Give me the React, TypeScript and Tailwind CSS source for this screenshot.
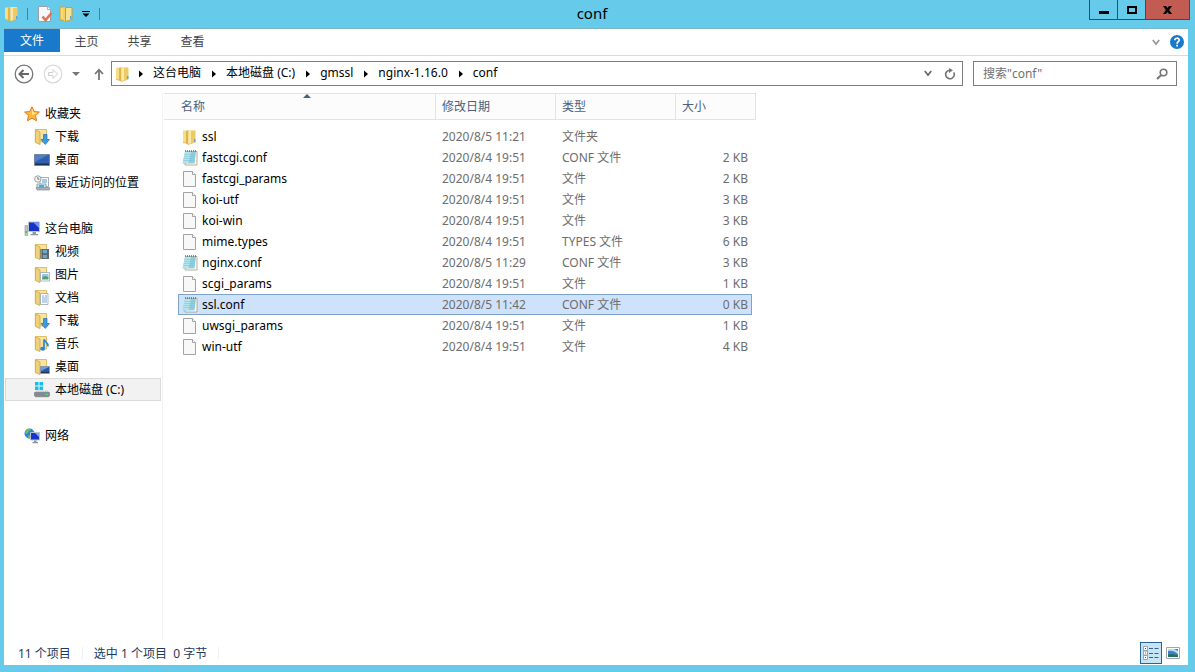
import React, { useState } from 'react';

type IconProps = { className?: string };

const FolderBase = () => (
  <>
    <path d="M1 1.500h5.500V15L1 13.500z" fill="#f7de86" />
    <path d="M4 2l2.500-1v14.500L4 14z" fill="#dfb54a" />
    <path d="M6.500 1H13V13L6.500 15.500z" fill="#fae9a6" />
    <path d="M9 2v12l4.500-1.500V1.500z" fill="#eccb66" />
    <path d="M1 13.500l3 .5 2.500 1.500L13.500 13" stroke="#c9a545" strokeWidth=".6" fill="none" />
  </>
);

const Folder = ({ className = 'size-4' }: IconProps) => (
  <svg viewBox="0 0 16 16" className={className} aria-hidden="true">
    <FolderBase />
    <path d="M12 10h1.500v3H12z" fill="#5ea5cf" />
  </svg>
);

const OpenFolder = () => (
  <>
    <path d="M1.500.5h11V13h-11z" fill="#f7e4a0" stroke="#d5b055" strokeWidth=".8" />
    <path d="M1.300.8L6 3v12.500L1.300 13.500z" fill="#efd17a" stroke="#cda845" strokeWidth=".8" />
  </>
);

const Star = () => (
  <svg viewBox="0 0 16 16" className="size-4" aria-hidden="true">
    <path d="M8 .8l2.200 4.700 5.200.6-3.900 3.500 1.100 5.200L8 12.200l-4.600 2.600 1.100-5.200L.6 6.100l5.200-.6z" fill="#fdb93a" stroke="#e2762a" strokeWidth="1" />
    <path d="M8 2.500l1.500 4 3.800.4L8 9z" fill="#ffe58a" />
  </svg>
);

const Downloads = () => (
  <svg viewBox="0 0 16 16" className="size-4" aria-hidden="true">
    <OpenFolder />
    <path d="M9.500 5.500h3.500v5h2.500l-4.250 5-4.250-5h2.500z" fill="#3d9be0" stroke="#1e6db5" strokeWidth=".7" />
  </svg>
);

const Desktop = () => (
  <svg viewBox="0 0 16 16" className="size-4" aria-hidden="true">
    <path d="M.5 2.500h15v11H.5z" fill="#2f5fae" stroke="#7387a0" />
    <path d="M1 3h13L1 10z" fill="#4d80c8" />
    <path d="M1 11.500h14v1.500H1z" fill="#1c2f50" />
  </svg>
);

const Recent = () => (
  <svg viewBox="0 0 16 16" className="size-4" aria-hidden="true">
    <path d="M6 2.500h8.500v9H6z" fill="#fafcfd" stroke="#8c9aa5" strokeWidth=".8" />
    <path d="M8 5h5M8 7h5" stroke="#4c9ac5" />
    <path d="M3 9h9v4H3z" fill="#d7e6ee" stroke="#84929d" strokeWidth=".8" />
    <path d="M5 10h5v2H5z" fill="#3faee0" />
    <path d="M2 12.500h13.500V15H3z" fill="#a7b1b8" stroke="#79848d" strokeWidth=".6" />
    <circle cx="3.800" cy="4" r="3.200" fill="#f5f7f8" stroke="#8e979e" strokeWidth=".9" />
    <path d="M3.800 2v2.200h1.700" stroke="#555" strokeWidth=".8" fill="none" />
  </svg>
);

const Computer = () => (
  <svg viewBox="0 0 16 16" className="size-4" aria-hidden="true">
    <path d="M1 4.500h2.500v10H1z" fill="#c2c7ca" stroke="#8c9296" strokeWidth=".6" />
    <path d="M1.500 10h1.500v2H1.500z" fill="#5bb945" />
    <path d="M4.500 1h11v9.500h-11z" fill="#1733c4" stroke="#bcc4cc" />
    <path d="M9.500 1.500H15v5.500z" fill="#6d9bf2" />
    <path d="M8.500 11h3.500v2H8.500zM6.500 13h7.500v1.200H6.500z" fill="#8f999f" />
  </svg>
);

const Videos = () => (
  <svg viewBox="0 0 16 16" className="size-4" aria-hidden="true">
    <OpenFolder />
    <path d="M6.500 5H15v10H6.500z" fill="#3b4449" />
    <path d="M8.500 5.500H13v4H8.500z" fill="#6fa7c9" />
    <path d="M8.500 10.500H13v4H8.500z" fill="#7f9cb0" />
    <path d="M7.500 5.500v9.500M14 5.500v9.500" stroke="#fff" strokeWidth=".8" strokeDasharray="1 1" />
  </svg>
);

const Pictures = () => (
  <svg viewBox="0 0 16 16" className="size-4" aria-hidden="true">
    <OpenFolder />
    <path d="M6.500 5.500h9v8.500h-9z" fill="#fff" stroke="#9aa4aa" strokeWidth=".8" />
    <path d="M8 7h6.500v3.500H8z" fill="#8ccae9" />
    <path d="M8 10.500l3-1.500 3.500 1v2.500H8z" fill="#5d9a74" />
  </svg>
);

const Documents = () => (
  <svg viewBox="0 0 16 16" className="size-4" aria-hidden="true">
    <OpenFolder />
    <path d="M6.500 3.500h7.500v11H6.500z" fill="#fff" stroke="#9aa4aa" strokeWidth=".8" />
    <path d="M8 6h2M11 6h2M8 8h5M8 10h5M8 12h5" stroke="#6b9fd2" strokeWidth=".9" />
  </svg>
);

const Music = () => (
  <svg viewBox="0 0 16 16" className="size-4" aria-hidden="true">
    <OpenFolder />
    <ellipse cx="8.700" cy="12.700" rx="2.400" ry="2" fill="#2e86d6" />
    <path d="M10 12.500V3.500c1 2 4.500 3 4 7" fill="none" stroke="#2e86d6" strokeWidth="1.700" />
  </svg>
);

const DesktopFolder = () => (
  <svg viewBox="0 0 16 16" className="size-4" aria-hidden="true">
    <OpenFolder />
    <path d="M6.500 7.500h9v7h-9z" fill="#2659a8" stroke="#8b98a5" strokeWidth=".8" />
    <path d="M7 8h8l-8 4z" fill="#6ba0dd" />
    <path d="M7 13h8v1H7z" fill="#243247" />
  </svg>
);

const Drive = () => (
  <svg viewBox="0 0 16 16" className="size-4" aria-hidden="true">
    <path d="M1 0h3.500v3.500H1zM5.500 0H9v3.500H5.500zM1 4.500h3.500V8H1zM5.500 4.500H9V8H5.500z" fill="#0fc0f3" />
    <path d="M2 8.500h12l1.500 2.500H.5z" fill="#c9cfd3" />
    <path d="M.5 10.500h15v3.500l-1 .8h-13l-1-.8z" fill="#808b92" stroke="#626d74" strokeWidth=".5" />
    <path d="M11.500 12.500H14" stroke="#55e070" strokeWidth="1.200" />
  </svg>
);

const Network = () => (
  <svg viewBox="0 0 16 16" className="size-4" aria-hidden="true">
    <circle cx="5.500" cy="5.500" r="5" fill="#2f86d8" />
    <path d="M2.500 1.500C4 .5 7 .5 7 1.500S4.500 3 4 4.500 2 6 .8 5.500zM4.500 7l2 .5-1 3H4z" fill="#6cc04e" />
    <path d="M6.500 4.500h9v7.500h-9z" fill="#1735c8" stroke="#bcc5cc" />
    <path d="M11 5h4v4z" fill="#7ca9f5" />
    <path d="M10 12.500h2.500V14H10zM8.500 14h5.500v1.200H8.500z" fill="#8a949b" />
  </svg>
);

const ConfFile = () => (
  <svg viewBox="0 0 16 16" className="size-4" aria-hidden="true">
    <path d="M4 1.500h11v13.500H3z" fill="#fdfdfb" stroke="#a8977c" strokeWidth=".8" />
    <path d="M3 1.500h11L12.500 13.500H.5z" fill="#8dcfe0" />
    <path d="M3 2h6L6.500 13H.8z" fill="#b4e3ee" />
    <path d="M2.800 4.500h10.500M2.500 6.500h10.500M2 8.500h10.500M1.500 10.500h11" stroke="#79bfd2" strokeWidth=".5" />
    <path d="M3 1h11.500" stroke="#5c6a70" strokeWidth="1.400" strokeDasharray="1 1" />
  </svg>
);

const PlainFile = () => (
  <svg viewBox="0 0 16 16" className="size-4" aria-hidden="true">
    <path d="M1.500.5h9l3 3v12h-12z" fill="#f8f8f8" stroke="#a3a3a3" />
    <path d="M10.500.5v3h3" fill="#fff" stroke="#a3a3a3" />
  </svg>
);

const PropertiesIcon = () => (
  <svg viewBox="0 0 16 16" className="size-4" aria-hidden="true">
    <path d="M1.500.5h9l3 3v12h-12z" fill="#f7f7f9" stroke="#9aa0a8" />
    <path d="M10.500.5v3h3" fill="#fff" stroke="#9aa0a8" strokeWidth=".8" />
    <path d="M5.500 10.500l3 3.500 6-7" fill="none" stroke="#e5714a" strokeWidth="2.500" />
  </svg>
);

const NewFolderIcon = () => (
  <svg viewBox="0 0 16 16" className="size-4" aria-hidden="true">
    <path d="M2 1h6v13H2z" fill="#f5dc7c" stroke="#c9a030" />
    <path d="M5 2l2.500-1v14.500L5 14z" fill="#f0cf66" />
    <path d="M7.500 1.500h6.500v12l-6.500 2z" fill="#f7e190" stroke="#c9a030" />
    <path d="M12 10h1.500v3H12z" fill="#5ea5cf" />
  </svg>
);

const Crumb = ({ className = '' }: IconProps) => (
  <svg viewBox="0 0 4 8" className={`mr-[10px] h-2 w-1 shrink-0 ${className}`} aria-hidden="true">
    <path d="M0 .5L4 4 0 7.500z" fill="#000" />
  </svg>
);

const Chevron = ({ className = '' }: IconProps) => (
  <svg viewBox="0 0 8 7" className={`h-[7px] w-2 ${className}`} aria-hidden="true">
    <path d="M.8 1L4 5 7.200 1" fill="none" stroke="currentColor" strokeWidth="1.800" />
  </svg>
);

const navGroups = [
  {
    label: '收藏夹',
    icon: <Star />,
    items: [
      { label: '下载', icon: <Downloads /> },
      { label: '桌面', icon: <Desktop /> },
      { label: '最近访问的位置', icon: <Recent /> },
    ],
  },
  {
    label: '这台电脑',
    icon: <Computer />,
    items: [
      { label: '视频', icon: <Videos /> },
      { label: '图片', icon: <Pictures /> },
      { label: '文档', icon: <Documents /> },
      { label: '下载', icon: <Downloads /> },
      { label: '音乐', icon: <Music /> },
      { label: '桌面', icon: <DesktopFolder /> },
      { label: '本地磁盘 (C:)', icon: <Drive />, active: true },
    ],
  },
  { label: '网络', icon: <Network />, items: [] },
] as {
  label: string;
  icon: React.ReactNode;
  items: { label: string; icon: React.ReactNode; active?: boolean }[];
}[];

const files = [
  { name: 'ssl', date: '2020/8/5 11:21', type: '文件夹', size: '' },
  { name: 'fastcgi.conf', date: '2020/8/4 19:51', type: 'CONF 文件', size: '2 KB' },
  { name: 'fastcgi_params', date: '2020/8/4 19:51', type: '文件', size: '2 KB' },
  { name: 'koi-utf', date: '2020/8/4 19:51', type: '文件', size: '3 KB' },
  { name: 'koi-win', date: '2020/8/4 19:51', type: '文件', size: '3 KB' },
  { name: 'mime.types', date: '2020/8/4 19:51', type: 'TYPES 文件', size: '6 KB' },
  { name: 'nginx.conf', date: '2020/8/5 11:29', type: 'CONF 文件', size: '3 KB' },
  { name: 'scgi_params', date: '2020/8/4 19:51', type: '文件', size: '1 KB' },
  { name: 'ssl.conf', date: '2020/8/5 11:42', type: 'CONF 文件', size: '0 KB' },
  { name: 'uwsgi_params', date: '2020/8/4 19:51', type: '文件', size: '1 KB' },
  { name: 'win-utf', date: '2020/8/4 19:51', type: '文件', size: '4 KB' },
];

function fileIcon(type: string) {
  if (type === '文件夹') return <Folder />;
  if (type === 'CONF 文件') return <ConfFile />;
  return <PlainFile />;
}

function TitleBar() {
  return (
    <header className="flex h-7 shrink-0 items-start">
      <div className="flex h-7 w-[95px] shrink-0 items-center pl-1">
        <Folder />
        <span className="ml-[7px] h-3 w-px bg-[#4a8199]" />
        <button aria-label="属性" className="ml-[9px]"><PropertiesIcon /></button>
        <button aria-label="新建文件夹" className="ml-[5px]"><NewFolderIcon /></button>
        <button aria-label="自定义快速访问工具栏" className="ml-2">
          <svg viewBox="0 0 8 6" className="h-[6px] w-2" aria-hidden="true">
            <path d="M0 0h8v1H0zM.5 2.500h7L4 6z" fill="#000" />
          </svg>
        </button>
      </div>
      <div className="flex h-7 w-0 shrink-0 items-center">
        <span className="ml-1 h-3 w-px shrink-0 bg-[#4a8199]" />
      </div>
      <h1 className="flex-1 pt-px text-center text-[15px] leading-6 text-black">conf</h1>
      <div className="mr-[5px] flex h-5 border-x border-b border-[#25536a]">
        <button aria-label="最小化" className="flex w-[27px] items-center justify-center">
          <span className="mt-[5px] h-[3px] w-[10px] bg-black" />
        </button>
        <button aria-label="最大化" className="flex w-7 items-center justify-center border-l border-[#25536a]">
          <span className="h-2 w-[10px] border-2 border-black" />
        </button>
        <button aria-label="关闭" className="flex w-11 items-center justify-center border-l border-[#25536a] bg-[#c25b52]">
          <svg viewBox="0 0 9 8" className="h-2 w-[9px]" aria-hidden="true">
            <path d="M0 0h3l1.500 2L6 0h3L6.200 4 9 8H6L4.500 6 3 8H0l2.800-4z" fill="#000" />
          </svg>
        </button>
      </div>
    </header>
  );
}

function Ribbon() {
  return (
    <nav className="flex h-[27px] shrink-0 items-start border-b border-[#dadbdc] text-[#444]">
      <button className="h-[23px] w-14 bg-[#1979ca] text-white">文件</button>
      {['主页', '共享', '查看'].map((tab) => (
        <button key={tab} className="h-[26px] w-[53px]">{tab}</button>
      ))}
      <div className="ml-auto flex h-[26px] items-center gap-[10px] pr-1">
        <button aria-label="展开功能区" className="text-[#9a9a9a]"><Chevron /></button>
        <button aria-label="帮助">
          <svg viewBox="0 0 14 14" className="size-[14px]" aria-hidden="true">
            <circle cx="7" cy="7" r="7" fill="#1979ca" />
            <path d="M4.800 5.200C4.800 2.600 9.200 2.600 9.200 5c0 1.600-2.100 1.700-2.100 3.700" fill="none" stroke="#fff" strokeWidth="1.700" />
            <path d="M6.200 9.800H8v1.700H6.200z" fill="#fff" />
          </svg>
        </button>
      </div>
    </nav>
  );
}

function AddressRow() {
  const crumbs = ['这台电脑', '本地磁盘 (C:)', 'gmssl', 'nginx-1.16.0', 'conf'];
  return (
    <div className="flex h-[37px] shrink-0 items-center pr-[11px] pb-[2px] pl-[10px]">
      <button aria-label="后退">
        <svg viewBox="0 0 20 20" className="size-5" aria-hidden="true">
          <circle cx="10" cy="10" r="8.800" fill="#fff" stroke="#757575" strokeWidth="1.300" />
          <path d="M15 10H6M9.500 6L5.500 10l4 4" fill="none" stroke="#666" strokeWidth="2" />
        </svg>
      </button>
      <button aria-label="前进" className="ml-[9px]">
        <svg viewBox="0 0 20 20" className="size-5" aria-hidden="true">
          <circle cx="10" cy="10" r="8.800" fill="#fff" stroke="#d8d8d8" strokeWidth="1.200" />
          <path d="M5.500 8.500H10V5.500l4.500 4.500-4.500 4.500v-3H5.500z" fill="none" stroke="#d0d0d0" />
        </svg>
      </button>
      <button aria-label="最近浏览的位置" className="ml-[9px]">
        <svg viewBox="0 0 8 4" className="h-1 w-2" aria-hidden="true">
          <path d="M0 0h8L4 4z" fill="#777" />
        </svg>
      </button>
      <button aria-label="上移" className="ml-[14px]">
        <svg viewBox="0 0 10 12" className="h-3 w-[10px]" aria-hidden="true">
          <path d="M5 12V1.500M1 6l4-4.300L9 6" fill="none" stroke="#757575" strokeWidth="1.800" />
        </svg>
      </button>
      <div className="ml-[7px] flex h-[25px] min-w-0 flex-1 items-center border border-[#7f7f7f] pr-[6px] pl-[3px]">
        <Folder />
        {crumbs.map((c, i) => (
          <React.Fragment key={c}>
            <Crumb className={i === 0 ? 'ml-2' : 'ml-[11px]'} />
            <button className="pb-[2px] whitespace-nowrap">{c}</button>
          </React.Fragment>
        ))}
        <button aria-label="以前的位置" className="ml-auto text-[#6c6c6c]"><Chevron /></button>
        <button aria-label="刷新" className="ml-3">
          <svg viewBox="0 0 12 12" className="size-3" aria-hidden="true">
            <path d="M9.700 4.300A4.300 4.300 0 1 1 5.500 2.200" fill="none" stroke="#757575" strokeWidth="1.600" />
            <path d="M5 0l4 2.300L5 5z" fill="#757575" />
          </svg>
        </button>
      </div>
      <div className="ml-[10px] flex h-[25px] w-[204px] items-center border border-[#7f7f7f] pr-2 pl-[9px]">
        <input aria-label="搜索" placeholder={'搜索"conf"'} className="min-w-0 flex-1 bg-transparent outline-none placeholder:text-[#707070]" />
        <button aria-label="开始搜索">
          <svg viewBox="0 0 12 12" className="size-3" aria-hidden="true">
            <circle cx="7.500" cy="4.500" r="3.300" fill="none" stroke="#757575" strokeWidth="1.600" />
            <path d="M5.200 7L1 11" stroke="#757575" strokeWidth="2" />
          </svg>
        </button>
      </div>
    </div>
  );
}

function NavPane() {
  return (
    <aside className="w-[159px] shrink-0 border-r border-[#f2f2f2] pt-[9px] pr-px pl-px">
      {navGroups.map((g) => (
        <section key={g.label} className="mb-[23px]">
          <a href="#" className="flex h-[23px] items-center gap-[5px] pl-[19px]">
            {g.icon}
            {g.label}
          </a>
          {g.items.map((it) => (
            <a
              key={it.label}
              href="#"
              className={`flex h-[23px] items-center gap-[5px] border pl-7 ${
                it.active ? 'border-[#dadada] bg-[#f2f2f2]' : 'border-transparent'
              }`}
            >
              {it.icon}
              {it.label}
            </a>
          ))}
        </section>
      ))}
    </aside>
  );
}

function FileTable() {
  const [selected, setSelected] = useState('ssl.conf');
  const th = 'h-[27px] border-y border-r border-[#e2e3e4] bg-[#fcfcfc] pl-[6px] text-left font-normal text-[#4c607a]';
  return (
    <table className="w-[592px] table-fixed border-separate border-spacing-0">
      <colgroup>
        <col className="w-[14px]" />
        <col className="w-[258px]" />
        <col className="w-[120px]" />
        <col className="w-[120px]" />
        <col className="w-[76px]" />
        <col className="w-1" />
      </colgroup>
      <thead>
        <tr>
          <td className="border-y border-[#e2e3e4] bg-[#fcfcfc]" />
          <th className="relative h-[27px] border-y border-r border-[#e2e3e4] bg-[#fcfcfc] pl-[3px] text-left font-normal text-[#4c607a]">
            名称
            <svg viewBox="0 0 8 4" className="absolute top-0 left-1/2 h-1 w-2 -translate-x-1/2" aria-hidden="true">
              <path d="M0 4h8L4 0z" fill="#4c607a" />
            </svg>
          </th>
          <th className={th}>修改日期</th>
          <th className={th}>类型</th>
          <th colSpan={2} className={th}>大小</th>
        </tr>
      </thead>
      <tbody className="before:block before:h-[6px] before:content-['']">
        {files.map((f) => {
          const on = f.name === selected;
          const cell = on ? 'border-y border-[#7da2ce] bg-[#cfe2fb]' : 'border-y border-transparent';
          return (
            <tr key={f.name} className="h-[21px] text-[#6d6d6d]" onClick={() => setSelected(f.name)}>
              <td />
              <td className={`${cell} h-[21px] border-l pl-[3px] text-black`}>
                <span className="flex items-center gap-1">
                  {fileIcon(f.type)}
                  {f.name}
                </span>
              </td>
              <td className={`${cell} pl-[6px]`}>{f.date}</td>
              <td className={`${cell} pl-[6px]`}>{f.type}</td>
              <td className={`${cell} border-r pr-[3px] text-right`}>{f.size}</td>
              <td />
            </tr>
          );
        })}
      </tbody>
    </table>
  );
}

function StatusBar() {
  return (
    <footer className="flex h-6 shrink-0 items-center pr-2 pl-[14px] text-[#1e395b]">
      <span className="pt-px">11 个项目</span>
      <span className="mx-[11px] h-3 w-px bg-[#f0f0f0]" />
      <span className="pt-px">选中 1 个项目&nbsp; 0 字节</span>
      <span className="mx-[11px] h-3 w-px bg-[#f0f0f0]" />
      <div className="ml-auto flex items-center gap-1">
        <button aria-label="详细信息" className="flex size-[22px] items-center justify-center border border-[#2a6496] bg-[#c5e4f5]">
          <svg viewBox="0 0 16 14" className="h-[14px] w-4" aria-hidden="true">
            <path d="M.5.500h4v4h-4zM.5 5h4v4h-4zM.5 9.500h4v4h-4z" fill="#fff" stroke="#8a949d" strokeWidth=".8" />
            <path d="M2 2h1v1H2zM2 11h1v1H2z" fill="#2c5f94" />
            <path d="M2 6.500h1v1H2z" fill="#d33" />
            <path d="M6 2.500h4M11.500 2.500h4M6 7.500h4M11.500 7.500h4M6 11.500h4M11.500 11.500h4" stroke="#44607e" />
          </svg>
        </button>
        <button aria-label="大缩略图">
          <svg viewBox="0 0 14 12" className="h-3 w-[14px]" aria-hidden="true">
            <path d="M.5.500h13v11H.5z" fill="#fff" stroke="#a0a6ac" />
            <path d="M2 2h10v8H2z" fill="#3f83c5" />
            <path d="M2 4c3-1 7 0 10 3V4L8 2H2z" fill="#b9e0f6" />
            <path d="M2 7.500c3-1 6-.5 10 1V10H2z" fill="#2c6c62" />
          </svg>
        </button>
      </div>
    </footer>
  );
}

export default function App() {
  return (
    <div className="flex min-h-screen flex-col bg-[#66cbea] font-['Noto_Sans','Noto_Sans_CJK_SC',sans-serif] text-xs leading-4 text-black">
      <TitleBar />
      <div className="mr-[7px] mb-[7px] ml-1 flex flex-1 flex-col border-t border-[#7fb4c9] bg-white">
        <Ribbon />
        <AddressRow />
        <div className="flex flex-1">
          <NavPane />
          <main className="min-w-0 flex-1 pl-px">
            <FileTable />
          </main>
        </div>
        <StatusBar />
      </div>
    </div>
  );
}
